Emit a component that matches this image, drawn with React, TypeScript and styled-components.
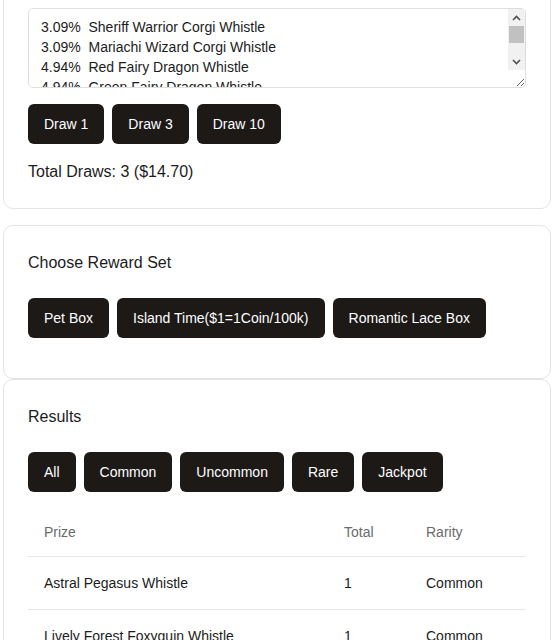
import React from "react";
import styled, { createGlobalStyle } from "styled-components";

const GlobalStyle = createGlobalStyle`
  html, body {
    margin: 0;
    padding: 0;
    background: #ffffff;
    font-family: "Liberation Sans", Arial, sans-serif;
    color: #1c1c1c;
  }
  * { box-sizing: border-box; }
`;

const Page = styled.div`
  margin-top: -17px;
  padding: 0 3px;
  display: flex;
  flex-direction: column;
`;

const Card = styled.section<{ $gap: number }>`
  border: 1px solid #e4e4e4;
  border-radius: 10px;
  padding: 24px;
  margin-bottom: ${(p) => p.$gap}px;
  background: #fff;
`;

const Title = styled.h3`
  margin: 0 0 24px;
  padding-top: 1px;
  font-size: 16px;
  line-height: 23px;
  font-weight: 400;
  color: #1c1c1c;
`;

const OddsBox = styled.div`
  position: relative;
  margin: 0 0 16px;
`;

const Odds = styled.textarea`
  display: block;
  width: 100%;
  height: 80px;
  padding: 8px 30px 8px 12px;
  border: 1px solid #dedede;
  border-radius: 5px;
  font-family: "Liberation Sans", Arial, sans-serif;
  font-size: 14px;
  line-height: 20px;
  color: #1c1c1c;
  white-space: pre;
  overflow-y: scroll;
  overflow-x: hidden;
  outline: none;
  scrollbar-width: none;
  &::-webkit-scrollbar {
    display: none;
  }
`;

const ScrollBar = styled.div`
  position: absolute;
  top: 1px;
  right: 1px;
  width: 17px;
  height: 61px;
  background: #f1f1f1;
  border-top-right-radius: 4px;
  display: flex;
  flex-direction: column;
  pointer-events: none;
`;

const ScrollArrow = styled.div`
  height: 17px;
  display: flex;
  align-items: center;
  justify-content: center;
  color: #505050;
`;

const ScrollTrack = styled.div`
  flex: 1;
  display: flex;
  flex-direction: column;
`;

const ScrollThumb = styled.div`
  height: 17px;
  margin: 0 1px;
  background: #c1c1c1;
`;

const ButtonRow = styled.div<{ $mb: number }>`
  display: flex;
  flex-wrap: wrap;
  gap: 8px;
  margin-bottom: ${(p) => p.$mb}px;
`;

const DarkButton = styled.button`
  height: 40px;
  padding: 0 16px;
  border: none;
  border-radius: 6px;
  background: #1c1917;
  color: #ffffff;
  font-family: "Liberation Sans", Arial, sans-serif;
  font-size: 14px;
  cursor: pointer;
`;

const Total = styled.div`
  font-size: 16px;
  line-height: 24px;
  color: #1c1c1c;
`;

const Table = styled.table`
  width: 100%;
  border-collapse: collapse;
  table-layout: fixed;
  font-size: 14px;
`;

const Th = styled.th<{ $w?: number }>`
  text-align: left;
  font-weight: 400;
  color: #6b6b6b;
  padding: 16px;
  line-height: 16px;
  border-bottom: 1px solid #e6e6e6;
  ${(p) => (p.$w ? `width: ${p.$w}px;` : "")}
`;

const Td = styled.td`
  padding: 16px;
  line-height: 20px;
  color: #1c1c1c;
  border-bottom: 1px solid #e6e6e6;
`;

const Chevron = ({ up }: { up?: boolean }) => (
  <svg width="9" height="6" viewBox="0 0 9 6" fill="none">
    <path
      d={up ? "M1 5 L4.5 1.5 L8 5" : "M1 1 L4.5 4.5 L8 1"}
      stroke="currentColor"
      strokeWidth="1.6"
    />
  </svg>
);

const odds = [
  ["3.09%", "Sheriff Warrior Corgi Whistle"],
  ["3.09%", "Mariachi Wizard Corgi Whistle"],
  ["4.94%", "Red Fairy Dragon Whistle"],
  ["4.94%", "Green Fairy Dragon Whistle"],
  ["4.94%", "Blue Fairy Dragon Whistle"],
  ["6.17%", "Astral Pegasus Whistle"],
  ["6.17%", "Lively Forest Foxyguin Whistle"],
  ["7.41%", "Snowy Owl Whistle"],
  ["7.41%", "Golden Tiger Whistle"],
  ["9.88%", "Pet Treat Bundle"],
];

const results = [
  { prize: "Astral Pegasus Whistle", total: 1, rarity: "Common" },
  { prize: "Lively Forest Foxyguin Whistle", total: 1, rarity: "Common" },
  { prize: "Snowy Owl Whistle", total: 1, rarity: "Common" },
];

export default function App() {
  const text = odds.map(([p, n]) => `${p}  ${n}`).join("\n");
  return (
    <>
      <GlobalStyle />
      <Page>
        <Card $gap={16}>
          <OddsBox>
            <Odds readOnly value={text} />
            <ScrollBar>
              <ScrollArrow>
                <Chevron up />
              </ScrollArrow>
              <ScrollTrack>
                <ScrollThumb />
              </ScrollTrack>
              <ScrollArrow>
                <Chevron />
              </ScrollArrow>
            </ScrollBar>
          </OddsBox>
          <ButtonRow $mb={16}>
            <DarkButton>Draw 1</DarkButton>
            <DarkButton>Draw 3</DarkButton>
            <DarkButton>Draw 10</DarkButton>
          </ButtonRow>
          <Total>Total Draws: 3 ($14.70)</Total>
        </Card>
        <Card $gap={0}>
          <Title>Choose Reward Set</Title>
          <ButtonRow $mb={16}>
            <DarkButton>Pet Box</DarkButton>
            <DarkButton>Island Time($1=1Coin/100k)</DarkButton>
            <DarkButton>Romantic Lace Box</DarkButton>
          </ButtonRow>
        </Card>
        <Card $gap={16}>
          <Title>Results</Title>
          <ButtonRow $mb={16}>
            <DarkButton>All</DarkButton>
            <DarkButton>Common</DarkButton>
            <DarkButton>Uncommon</DarkButton>
            <DarkButton>Rare</DarkButton>
            <DarkButton>Jackpot</DarkButton>
          </ButtonRow>
          <Table>
            <thead>
              <tr>
                <Th $w={300}>Prize</Th>
                <Th $w={82}>Total</Th>
                <Th>Rarity</Th>
              </tr>
            </thead>
            <tbody>
              {results.map((r) => (
                <tr key={r.prize}>
                  <Td>{r.prize}</Td>
                  <Td>{r.total}</Td>
                  <Td>{r.rarity}</Td>
                </tr>
              ))}
            </tbody>
          </Table>
        </Card>
      </Page>
    </>
  );
}
